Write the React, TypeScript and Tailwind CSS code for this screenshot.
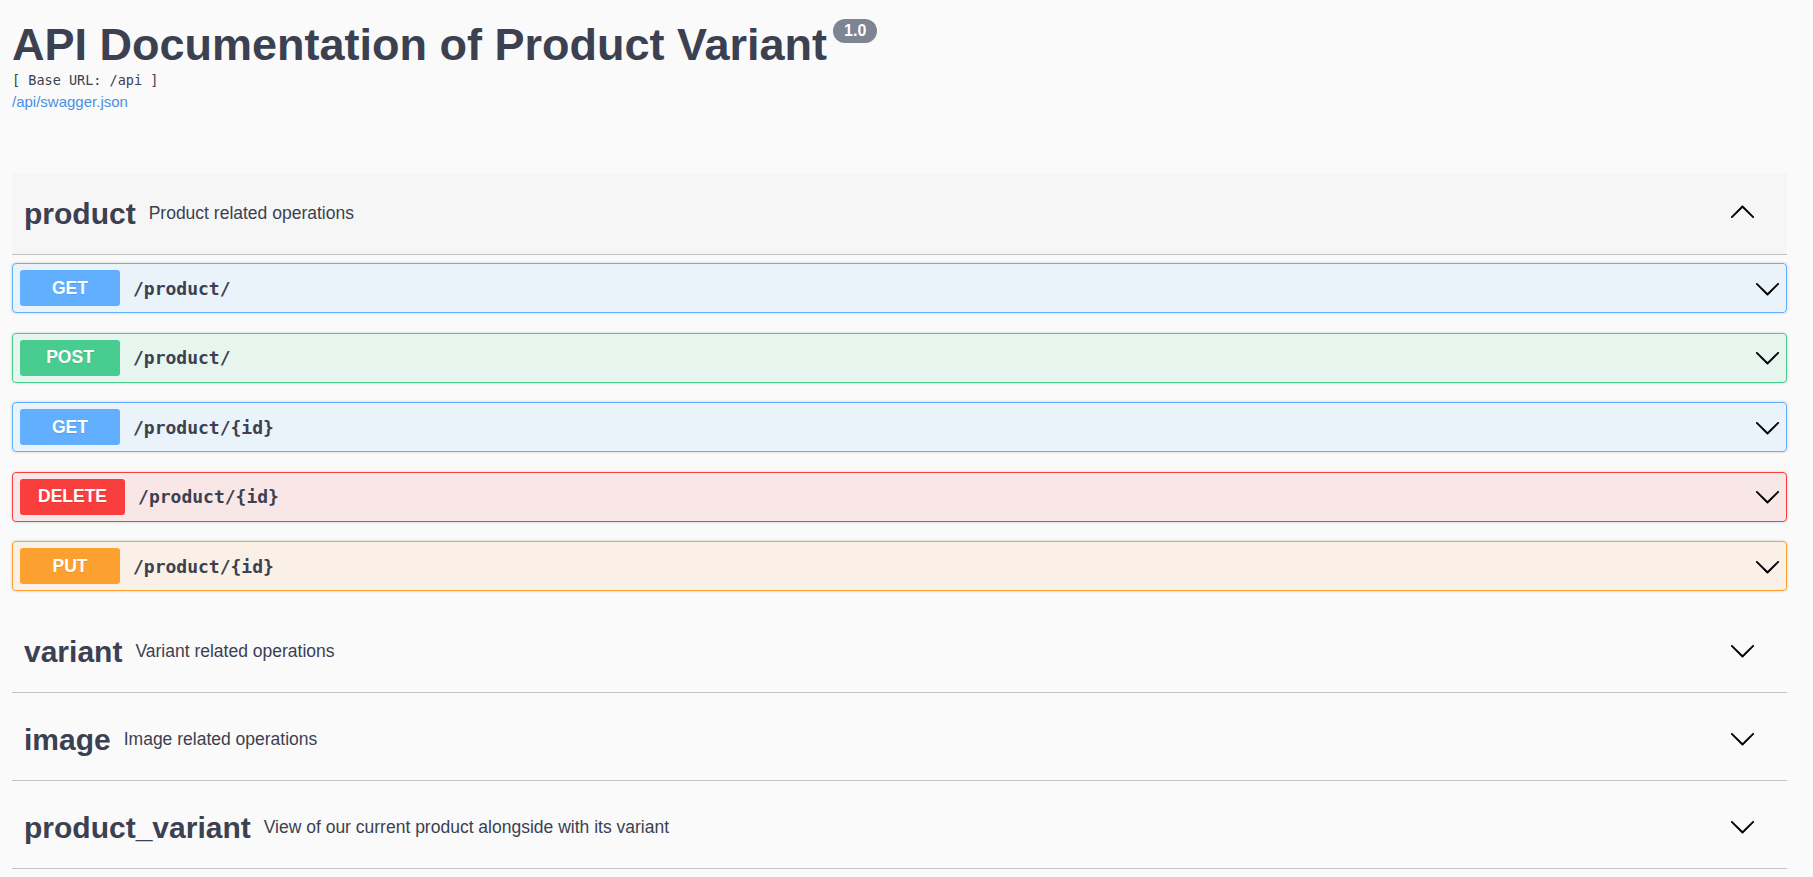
import { useState } from 'react'

type Op = { method: 'GET' | 'POST' | 'DELETE' | 'PUT'; path: string }

const methodStyles: Record<Op['method'], { row: string; badge: string }> = {
  GET: {
    row: 'border-[#61affe] bg-[rgba(97,175,254,0.1)]',
    badge: 'bg-[#61affe]',
  },
  POST: {
    row: 'border-[#49cc90] bg-[rgba(73,204,144,0.1)]',
    badge: 'bg-[#49cc90]',
  },
  DELETE: {
    row: 'border-[#f93e3e] bg-[rgba(249,62,62,0.1)]',
    badge: 'bg-[#f93e3e]',
  },
  PUT: {
    row: 'border-[#fca130] bg-[rgba(252,161,48,0.1)]',
    badge: 'bg-[#fca130]',
  },
}

const productOps: Op[] = [
  { method: 'GET', path: '/product/' },
  { method: 'POST', path: '/product/' },
  { method: 'GET', path: '/product/{id}' },
  { method: 'DELETE', path: '/product/{id}' },
  { method: 'PUT', path: '/product/{id}' },
]

const tags = [
  { name: 'product', description: 'Product related operations', ops: productOps },
  { name: 'variant', description: 'Variant related operations', ops: [] },
  { name: 'image', description: 'Image related operations', ops: [] },
  {
    name: 'product_variant',
    description: 'View of our current product alongside with its variant',
    ops: [],
  },
]

function Arrow({ up, className = '' }: { up?: boolean; className?: string }) {
  return (
    <svg
      width="27"
      height="27"
      viewBox="0 0 20 20"
      className={`shrink-0 ${up ? 'rotate-180' : ''} ${className}`}
      fill="#000"
    >
      <path d="M17.418 6.109c.272-.268.709-.268.979 0s.271.701 0 .969l-7.908 7.83c-.27.268-.707.268-.979 0l-7.908-7.83c-.27-.268-.27-.701 0-.969.271-.268.709-.268.979 0L10 13.25l7.418-7.141z" />
    </svg>
  )
}

function OpRow({ op }: { op: Op }) {
  const s = methodStyles[op.method]
  return (
    <div
      className={`flex items-center h-[50px] border rounded-[4px] pl-[7px] pr-[5px] shadow-[0_0_3px_rgba(0,0,0,0.19)] ${s.row}`}
    >
      <span
        className={`min-w-[100px] h-[36px] px-[18px] rounded-[3px] flex items-center justify-center text-white font-bold text-[17.5px] [text-shadow:0_1px_0_rgba(0,0,0,0.1)] ${s.badge}`}
      >
        {op.method}
      </span>
      <span className="ml-[13px] flex-1 font-['DejaVu_Sans_Mono',monospace] font-bold text-[18px] text-[#3b4151]">
        {op.path}
      </span>
      <Arrow />
    </div>
  )
}

export default function App() {
  const [open, setOpen] = useState<string>('product')

  return (
    <div className="min-h-[877px] bg-[#fafafa] font-['Liberation_Sans',Arial,sans-serif] text-[#3b4151] pl-[12px] pr-[26px]">
      <div className="pt-[18px]">
        <div className="flex items-start">
          <h1 className="text-[45px] leading-[54px] font-bold text-[#3b4151]">
            API Documentation of Product Variant
          </h1>
          <span className="ml-[6px] mt-[1px] h-[24px] px-[11px] rounded-full bg-[#7d8492] text-white font-bold text-[16px] leading-[24px]">
            1.0
          </span>
        </div>
        <p className="font-['DejaVu_Sans_Mono',monospace] text-[13.5px] leading-[16px] text-[#3b4151]">
          [ Base URL: /api ]
        </p>
        <a className="block mt-[5px] text-[15px] leading-[18px] text-[#4990e2]">
          /api/swagger.json
        </a>
      </div>

      <div className="mt-[62px] flex flex-col gap-[6px]">
        {tags.map((tag) => {
          const isOpen = open === tag.name
          return (
            <div key={tag.name}>
              <div
                onClick={() => setOpen(isOpen ? '' : tag.name)}
                className={`flex items-center h-[82px] pl-[12px] pr-[31px] border-b border-[rgba(59,65,81,0.3)] cursor-pointer ${
                  isOpen ? 'bg-[#f6f6f6]' : ''
                }`}
              >
                <span className="text-[30px] font-bold">{tag.name}</span>
                <span className="ml-[13px] text-[17.5px] flex-1">{tag.description}</span>
                <Arrow up={isOpen} className="mb-[3px]" />
              </div>
              {isOpen && tag.ops.length > 0 && (
                <div className="pt-[8px] pb-[14px] flex flex-col gap-[19.5px]">
                  {tag.ops.map((op, i) => (
                    <OpRow key={i} op={op} />
                  ))}
                </div>
              )}
            </div>
          )
        })}
      </div>
    </div>
  )
}
